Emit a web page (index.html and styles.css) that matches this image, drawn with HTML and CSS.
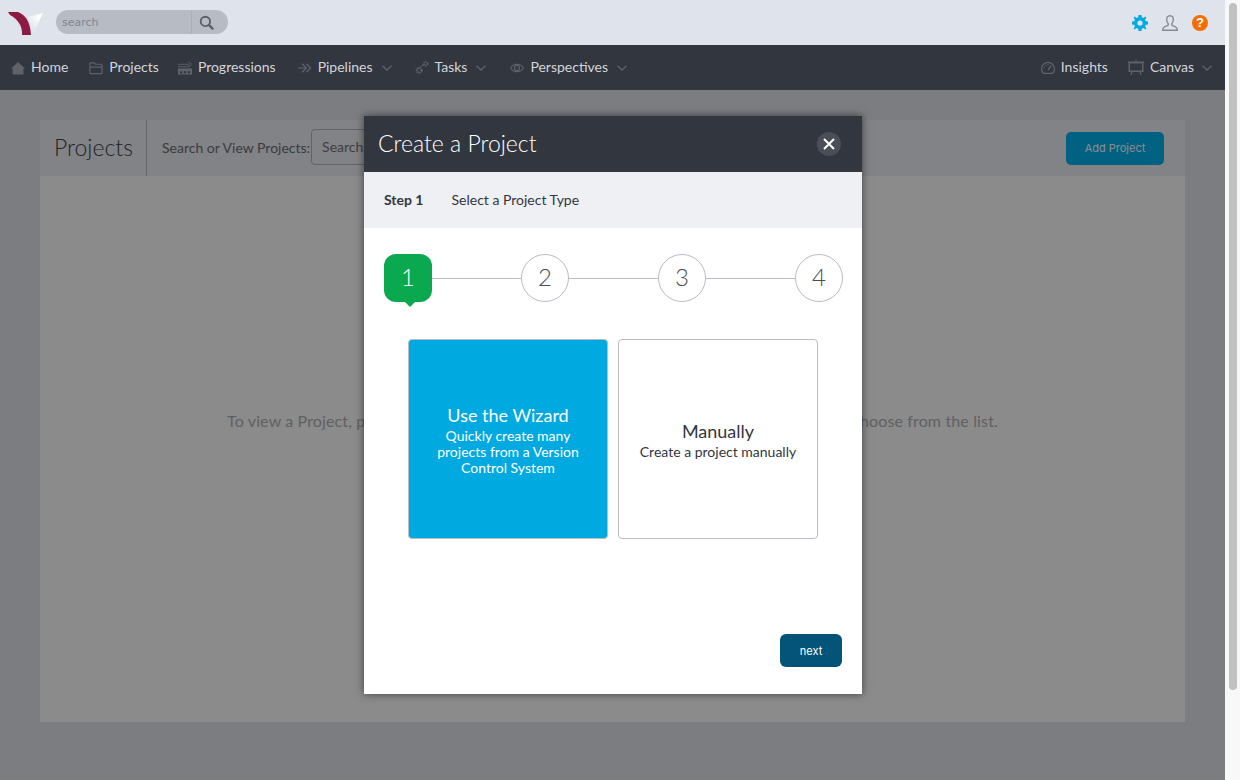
FILE: index.html
```html
<!DOCTYPE html>
<html>
<head>
<meta charset="utf-8">
<title>Create a Project</title>
<link rel="stylesheet" href="styles.css">
</head>
<body>
<div class="page">
  <div class="topbar">
    <svg class="logo" width="36" height="25" viewBox="0 0 36 25">
      <defs>
        <linearGradient id="logofade" x1="0" y1="1" x2="1" y2="0">
          <stop offset="0.2" stop-color="#dfe3ec"/>
          <stop offset="0.8" stop-color="#ffffff"/>
        </linearGradient>
      </defs>
      <path d="M20 6 L35 2 L25 23 Z" fill="url(#logofade)"/>
      <path d="M0 1 L10 1 C17 4 22 9 23 24 L14 24 C15 14 8 7 2 4 Z" fill="#8c1a43"/>
    </svg>
    <div class="search">
      <span class="search-text">search</span>
      <span class="search-btn">
        <svg width="15" height="15" viewBox="0 0 16 16"><circle cx="6.8" cy="6.8" r="5" fill="none" stroke="#5a5e68" stroke-width="2"/><path d="M10.5 10.5 L14.5 14.5" stroke="#5a5e68" stroke-width="2.4" stroke-linecap="round"/></svg>
      </span>
    </div>
    <div class="top-icons">
      <svg width="16" height="16" viewBox="0 0 16 16"><path d="M6.6 0 H9.4 L9.8 2.2 L11.5 2.9 L13.4 1.6 L14.4 2.6 L13.1 4.5 L13.8 6.2 L16 6.6 V9.4 L13.8 9.8 L13.1 11.5 L14.4 13.4 L13.4 14.4 L11.5 13.1 L9.8 13.8 L9.4 16 H6.6 L6.2 13.8 L4.5 13.1 L2.6 14.4 L1.6 13.4 L2.9 11.5 L2.2 9.8 L0 9.4 V6.6 L2.2 6.2 L2.9 4.5 L1.6 2.6 L2.6 1.6 L4.5 2.9 L6.2 2.2 Z M8 5.4 A2.6 2.6 0 1 0 8 10.6 A2.6 2.6 0 1 0 8 5.4 Z" fill="#00a9e0" fill-rule="evenodd"/></svg>
      <svg width="16" height="16" viewBox="0 0 16 16"><path d="M8 .7 C10.4 .7 11.5 2.6 11.3 5 C11.2 6.8 10.5 8 9.8 8.8 C9.5 9.6 9.8 10.2 10.6 10.6 C12.6 11.4 15.2 11.8 15.4 15.3 H.6 C.8 11.8 3.4 11.4 5.4 10.6 C6.2 10.2 6.5 9.6 6.2 8.8 C5.5 8 4.8 6.8 4.7 5 C4.5 2.6 5.6 .7 8 .7 Z" fill="none" stroke="#868b97" stroke-width="1.4"/></svg>
      <span class="help">?</span>
    </div>
  </div>

  <div class="nav">
    <a class="nav-item">
      <svg width="14" height="14" viewBox="0 0 14 14"><path d="M7 1 L14 7.5 H12.4 V13.5 H1.6 V7.5 H0 Z" fill="#5e626c"/></svg>
      Home
    </a>
    <a class="nav-item">
      <svg width="14" height="14" viewBox="0 0 15 14"><path d="M1 12 V2.5 Q1 1.5 2 1.5 H5.5 L7 3 H13 Q14 3 14 4 V12 Q14 13 13 13 H2 Q1 13 1 12 Z M1 6 H14" fill="none" stroke="#5e626c" stroke-width="1.3"/></svg>
      Projects
    </a>
    <a class="nav-item">
      <svg width="14" height="14" viewBox="0 0 15 14"><path d="M0 3 H12 M0 5.6 H12" stroke="#5e626c" stroke-width="1"/><path d="M11 .3 L14.5 3 L11 5.8" fill="none" stroke="#5e626c" stroke-width="1"/><path d="M0 7.5 H15 V14 H0 Z" fill="#5e626c"/><path d="M2 10.5 H4.5 V12.5 H2 Z M6.2 10.5 H8.7 V12.5 H6.2 Z M10.4 10.5 H12.9 V12.5 H10.4 Z" fill="#32363f"/></svg>
      Progressions
    </a>
    <a class="nav-item has-menu">
      <svg width="14" height="14" viewBox="0 0 15 14"><path d="M0 7 H8 M4.5 2.5 L9 7 L4.5 11.5 M9 2.5 L13.5 7 L9 11.5" fill="none" stroke="#5e626c" stroke-width="1.3"/></svg>
      Pipelines
      <svg class="chevron" width="10" height="6" viewBox="0 0 10 6"><path d="M.5 .8 L5 5 L9.5 .8" fill="none" stroke="#5e626c" stroke-width="1.3"/></svg>
    </a>
    <a class="nav-item has-menu">
      <svg width="14" height="15" viewBox="0 0 15 15"><circle cx="4.5" cy="10.5" r="2.6" fill="none" stroke="#5e626c" stroke-width="2.2" stroke-dasharray="1.6 .8"/><circle cx="11.5" cy="3.5" r="2" fill="none" stroke="#5e626c" stroke-width="1.8" stroke-dasharray="1.3 .7"/><circle cx="8.3" cy="5" r=".9" fill="#5e626c"/><circle cx="6.8" cy="6.3" r=".7" fill="#5e626c"/></svg>
      Tasks
      <svg class="chevron" width="10" height="6" viewBox="0 0 10 6"><path d="M.5 .8 L5 5 L9.5 .8" fill="none" stroke="#5e626c" stroke-width="1.3"/></svg>
    </a>
    <a class="nav-item has-menu">
      <svg width="14" height="10" viewBox="0 0 14 10"><path d="M.6 5 C3.5 .2 10.5 .2 13.4 5 C10.5 9.8 3.5 9.8 .6 5 Z" fill="none" stroke="#5e626c" stroke-width="1.1"/><circle cx="7" cy="5" r="2.5" fill="none" stroke="#5e626c" stroke-width="1.2"/></svg>
      Perspectives
      <svg class="chevron" width="10" height="6" viewBox="0 0 10 6"><path d="M.5 .8 L5 5 L9.5 .8" fill="none" stroke="#5e626c" stroke-width="1.3"/></svg>
    </a>
    <a class="nav-item nav-right">
      <svg width="14" height="13" viewBox="0 0 14 13"><path d="M2.4 12.3 A6.4 6.4 0 1 1 11.6 12.3 Z" fill="none" stroke="#5e626c" stroke-width="1.2"/><path d="M7 9 L10.2 4.6" stroke="#5e626c" stroke-width="1.4"/><path d="M3 6.6 H4 M4.6 4 L5.2 4.8 M7 3 V4" stroke="#5e626c"/></svg>
      Insights
    </a>
    <a class="nav-item has-menu">
      <svg width="16" height="15" viewBox="0 0 16 15"><path d="M1.2 2.8 H14.8 V11.2 H1.2 Z" fill="none" stroke="#5e626c" stroke-width="1.5"/><path d="M0 2.2 H16 M8 0 V2.2 M4 11.2 L3 15 M12 11.2 L13 15" stroke="#5e626c" stroke-width="1.3"/></svg>
      Canvas
      <svg class="chevron" width="10" height="6" viewBox="0 0 10 6"><path d="M.5 .8 L5 5 L9.5 .8" fill="none" stroke="#5e626c" stroke-width="1.3"/></svg>
    </a>
  </div>

  <div class="content">
    <div class="panel">
      <div class="panel-head">
        <h2 class="panel-title">Projects</h2>
        <label class="panel-label">Search or View Projects:</label>
        <input class="panel-input" type="text" placeholder="Search">
        <button class="add-btn">Add Project</button>
      </div>
      <div class="panel-body">
        To view a Project, please use the search box above, or click the magnifying glass icon to choose from the list.
      </div>
    </div>

    <!-- dark layer and dialog -->
    <div class="overlay"></div>
    <div class="modal">
      <div class="modal-head">
        <span class="modal-title">Create a Project</span>
        <span class="modal-close">
          <svg width="12" height="12" viewBox="0 0 12 12"><path d="M1 1 L11 11 M11 1 L1 11" stroke="#fff" stroke-width="2"/></svg>
        </span>
      </div>
      <div class="modal-step">
        <b>Step 1</b>
        <span>Select a Project Type</span>
      </div>
      <div class="modal-body">
        <div class="stepper">
          <div class="step step-on">1</div>
          <div class="step-line"></div>
          <div class="step">2</div>
          <div class="step-line"></div>
          <div class="step">3</div>
          <div class="step-line"></div>
          <div class="step">4</div>
        </div>
        <div class="cards">
          <div class="card card-on">
            <div class="card-title">Use the Wizard</div>
            <div class="card-text">Quickly create many projects from a Version Control System</div>
          </div>
          <div class="card">
            <div class="card-title">Manually</div>
            <div class="card-text">Create a project manually</div>
          </div>
        </div>
        <div class="modal-foot">
          <button class="next-btn">next</button>
        </div>
      </div>
    </div>
  </div>
</div>
<div class="scrollbar"><div class="scroll-thumb"></div></div>
</body>
</html>
```

FILE: styles.css
```css
html, body {
  margin: 0;
  height: 780px;
  overflow: hidden;
}

body {
  display: flex;
  font-family: Lato, "Liberation Sans", sans-serif;
  color: #32363f;
}

.page {
  width: 1225px;
  display: flex;
  flex-direction: column;
}

/* Top bar */
.topbar {
  height: 45px;
  background-color: #dfe3ec;
  display: flex;
  align-items: center;
  padding: 0 17px 0 8px;
}

.logo {
  margin-right: 12px;
  margin-top: 2px;
}

.search {
  width: 172px;
  height: 24px;
  margin-top: -1px;
  border-radius: 12px;
  background-color: #b7bbc4;
  display: flex;
  align-items: center;
  justify-content: space-between;
}

.search-text {
  padding-left: 6px;
  font-family: "DejaVu Sans", sans-serif;
  font-size: 11px;
  color: #80858f;
}

.search-btn {
  width: 37px;
  height: 24px;
  border-left: 1px solid #adb1ba;
  box-sizing: border-box;
  display: flex;
  align-items: center;
  justify-content: center;
  padding-right: 8px;
}

.top-icons {
  margin-left: auto;
  display: flex;
  align-items: center;
  gap: 14px;
}

.help {
  width: 16px;
  height: 16px;
  border-radius: 50%;
  background-color: #f56c00;
  color: white;
  font-family: "Liberation Sans", sans-serif;
  font-size: 13px;
  font-weight: bold;
  line-height: 16px;
  text-align: center;
}

/* Main nav */
.nav {
  height: 45px;
  box-sizing: border-box;
  padding: 0 13px 2px 11px;
  background-color: #32363f;
  display: flex;
  align-items: center;
}

.nav-item {
  display: flex;
  align-items: center;
  gap: 6px;
  margin-right: 20px;
  font-size: 14px;
  color: #d3d5da;
}

.nav-item svg {
  margin-top: 2px;
}

.nav-item.has-menu {
  margin-right: 24px;
}

/* gaps between items, the text is a bit wider than the original font */
.nav-item:nth-child(1) {
  margin-right: 21px;
}

.nav-item:nth-child(2) {
  margin-right: 19px;
}

.nav-item:nth-child(3) {
  margin-right: 22px;
}

.nav-item.has-menu:nth-child(4) {
  margin-right: 23px;
}

.nav-item.has-menu:last-child {
  margin-right: 0;
}

.nav-right {
  margin-left: auto;
}

.chevron {
  margin-left: 3px;
}

.nav-item:last-child .chevron {
  margin-left: 2px;
}

/* Page content */
.content {
  position: relative;
  flex: 1;
  background-color: #e3e5ec;
  padding: 30px 40px 0 40px;
}

.panel {
  height: 602px;
  background-color: white;
}

.panel-head {
  height: 56px;
  background-color: #eef0f6;
  display: flex;
  align-items: center;
  padding-right: 21px;
}

.panel-title {
  width: 92px;
  height: 56px;
  line-height: 55px;
  margin: 0;
  padding-left: 14px;
  border-right: 1px solid #b4b6bc;
  font-size: 23px;
  font-weight: 300;
  color: #3c3f46;
}

.panel-label {
  margin-left: 15px;
  margin-top: -2px;
  font-size: 14px;
  color: #6d6f74;
}

.panel-input {
  width: 180px;
  height: 36px;
  box-sizing: border-box;
  margin-top: -3px;
  margin-left: 1px;
  padding: 0 10px;
  border: 1px solid #b4b6bc;
  border-radius: 4px;
  background: transparent;
  font-family: inherit;
  font-size: 14px;
}

.add-btn {
  margin-left: auto;
  width: 98px;
  height: 33px;
  border: none;
  border-radius: 5px;
  background-color: #00b2f0;
  color: white;
  font-family: Inter, sans-serif;
  font-size: 11px;
}

.panel-body {
  padding-top: 235px;
  text-align: center;
  font-size: 16px;
  letter-spacing: 0.14px;
  color: #b0b1b5;
}

.overlay {
  position: absolute;
  left: 0;
  top: 0;
  right: 0;
  bottom: 0;
  background-color: rgba(0, 0, 0, 0.455);
}

/* Dialog */
.modal {
  position: absolute;
  left: 364px;
  top: 26px;
  width: 498px;
  height: 578px;
  background-color: white;
  box-shadow: 0 0 8px rgba(0, 0, 0, 0.55);
  display: flex;
  flex-direction: column;
}

.modal-head {
  height: 56px;
  flex: none;
  background-color: #32363f;
  display: flex;
  align-items: center;
  justify-content: space-between;
  padding: 0 21px 0 14px;
}

.modal-title {
  margin-top: -2px;
  font-size: 23px;
  font-weight: 300;
  color: white;
}

.modal-close {
  width: 24px;
  height: 24px;
  border-radius: 50%;
  background-color: #4a4e57;
  display: flex;
  align-items: center;
  justify-content: center;
}

.modal-step {
  height: 56px;
  flex: none;
  box-sizing: border-box;
  padding: 0 0 2px 20px;
  background-color: #eff0f4;
  display: flex;
  align-items: center;
  gap: 28px;
  font-size: 14px;
}

.modal-body {
  flex: 1;
  padding: 26px 19px 27px 20px;
  display: flex;
  flex-direction: column;
}

.stepper {
  display: flex;
  align-items: center;
}

.step {
  position: relative;
  width: 48px;
  height: 48px;
  box-sizing: border-box;
  border: 1px solid #b9bcc5;
  border-radius: 50%;
  text-align: center;
  font-size: 24px;
  font-weight: 300;
  line-height: 43px;
  color: #4a4e57;
}

.step-on {
  border: none;
  border-radius: 12px;
  background-color: #0aa94f;
  color: white;
  line-height: 45px;
}

.step-on:after {
  content: "";
  position: absolute;
  left: 20px;
  top: 47px;
  width: 0;
  height: 0;
  border-left: 6px solid transparent;
  border-right: 6px solid transparent;
  border-top: 6px solid #0aa94f;
}

.step-line {
  flex: 1;
  height: 1px;
  background-color: #b9bcc5;
}

.cards {
  display: flex;
  gap: 10px;
  margin-top: 37px;
  margin-left: 24px;
}

.card {
  width: 200px;
  height: 200px;
  box-sizing: border-box;
  border: 1px solid #b9bcc5;
  border-radius: 4px;
  padding: 2px 20px 0 20px;
  display: flex;
  flex-direction: column;
  justify-content: center;
  text-align: center;
}

.card-on {
  background-color: #00a9e0;
  color: white;
}

.card-title {
  margin-bottom: 2px;
  font-size: 18px;
  line-height: 22px;
}

.card-text {
  font-size: 14px;
  line-height: 16px;
}

.modal-foot {
  margin-top: auto;
  margin-right: 1px;
  display: flex;
  justify-content: flex-end;
}

.next-btn {
  width: 62px;
  height: 33px;
  border: none;
  border-radius: 6px;
  background-color: #045378;
  color: white;
  font-family: Inter, sans-serif;
  font-size: 11px;
}

/* Scrollbar on the right */
.scrollbar {
  width: 15px;
  background-color: #f8f8f8;
  padding: 3px 3px 0 4px;
  box-sizing: border-box;
}

.scroll-thumb {
  height: 687px;
  border-radius: 4px;
  background-color: #c1c1c1;
}
```
